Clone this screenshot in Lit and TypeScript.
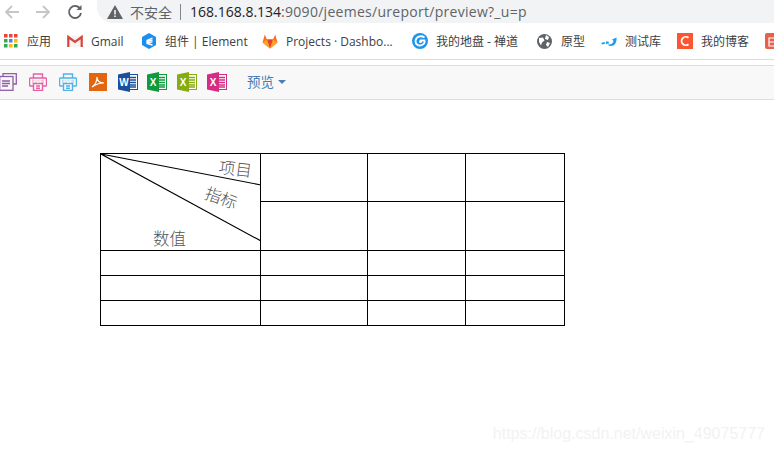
import { LitElement, html, css, svg } from "lit";
import { customElement } from "lit/decorators.js";

const printer = (c: string, label = "PDF") => html`<svg class="tool" width="18" height="18" viewBox="0 0 18 18" fill="none" stroke=${c} stroke-width="1.4">
  <path d="M4.500 5V1h9v4"/><path d="M4 13H1.500a1 1 0 0 1-1-1V6a1 1 0 0 1 1-1h15a1 1 0 0 1 1 1v6a1 1 0 0 1-1 1H14"/>
  <path d="M4.500 10.500v7h9v-7z"/><path d="M7 13h4M7 15.200h4"/>
  <rect x="3" y="6.500" width="12" height="4" fill=${c} stroke="none" opacity=".35"/>
  <text x="9" y="10" text-anchor="middle" font-size="4.500" font-family="Liberation Sans" font-weight="700" fill="#fff" stroke="none">${label}</text>
</svg>`;

const office = (dark: string, mid: string, letter: string) => html`<svg class="tool" width="20" height="20" viewBox="0 0 20 20">
  <rect x="9" y="2.500" width="10.500" height="15" fill="#fff" stroke=${mid} stroke-width="1"/>
  <path d="M11 5.500h7M11 8h7M11 10.500h7M11 13h7M11 15h7" stroke=${mid} stroke-width="1.300"/>
  <path d="M0 2.500 12 0v20L0 17.500z" fill=${dark}/>
  <text x="6" y="13.500" text-anchor="middle" font-size="10" font-weight="700" font-family="Liberation Sans" fill="#fff">${letter}</text>
</svg>`;

const appsDots = ["#e8453c","#e8453c","#e8453c","#34a853","#4285f4","#fbbc05","#34a853","#fbbc05","#34a853"];

const icons = {
  apps: html`<svg width="14" height="14" viewBox="0 0 14 14">${appsDots.map((c, i) => svg`<rect x=${(i % 3) * 5} y=${Math.floor(i / 3) * 5} width="3.500" height="3.500" fill=${c}/>`)}</svg>`,
  gmail: html`<svg width="16" height="16" viewBox="0 0 16 16"><rect y="2.500" width="16" height="11.500" fill="#f4f4f4"/><path d="M1.300 14V4L8 9l6.700-5v10" fill="none" stroke="#d8453a" stroke-width="2.200"/></svg>`,
  element: html`<svg width="16" height="16" viewBox="0 0 16 16"><path d="M8 0l7 4v8l-7 4-7-4V4z" fill="#1b8ff0"/><path d="M11.500 5 6 7.500v3L11.500 12M6 8.500l5.500-1.500M6.500 10l5-1.200" fill="none" stroke="#fff" stroke-width="1.300"/></svg>`,
  gitlab: html`<svg width="16" height="16" viewBox="0 0 16 16"><path d="M8 15.500 0.500 9.500 2.800 1.500 5 6.500h6l2.200-5 2.300 8z" fill="#fc6d26"/><path d="M8 15.500 5 6.500h6z" fill="#e24329"/><path d="M8 15.500.5 9.500 5 6.500zM8 15.500l7.500-6-4.500-3z" fill="#fca326"/></svg>`,
  disk: html`<svg width="16" height="16" viewBox="0 0 16 16"><circle cx="8" cy="8" r="8" fill="#1e95ea"/><path d="M12.500 4.500C9 2 4 3.500 3.500 8c-.3 3 3 5.500 6.500 4 2-.8 3-2.500 2.500-4.500H8" fill="none" stroke="#fff" stroke-width="1.800"/><circle cx="8.500" cy="8.500" r="1.500" fill="#fff"/></svg>`,
  globe: html`<svg width="15" height="15" viewBox="0 0 15 15"><circle cx="7.500" cy="7.500" r="7.500" fill="#5f6368"/><path d="M2 4l4-.5 1.500 3-2.500 2-1 3-2-3.500zM9 1l3 2-1 3-3-1zM10 8l3 1-2 4-2-2z" fill="#fff"/></svg>`,
  test: html`<svg width="16" height="16" viewBox="0 0 16 16"><path d="M0 10l3.500-1 1 1.500-3 1zM5 8.500h2.500l.5 2-3 .5zM7 11.500c3 .5 5-1 5.500-3.500L11 6.500l4.500-2c.5 5-2 8.500-5.500 8.500-1.500 0-2.500-.5-3-1.500z" fill="#1aa0ef"/></svg>`,
  csdn: html`<svg width="16" height="16" viewBox="0 0 16 16"><rect width="16" height="16" fill="#fc5531"/><path d="M11.500 4.800A4.200 4.200 0 1 0 11.500 11.200" fill="none" stroke="#fff" stroke-width="1.800"/></svg>`,
  jian: html`<svg width="16" height="16" viewBox="0 0 16 16"><rect width="16" height="16" rx="2" fill="#e8604c"/><path d="M4 5h8v8H4zM4 9h8" fill="none" stroke="#fff" stroke-width="1.200"/></svg>`,
};

const bookmarks = [
  { i: icons.apps, t: "应用", tw: 24, gap: 9, after: 16 },
  { i: icons.gmail, t: "Gmail", tw: 33, gap: 8, after: 17 },
  { i: icons.element, t: "组件 | Element", tw: 81, gap: 8, after: 16 },
  { i: icons.gitlab, t: "Projects · Dashbo...", tw: 109, gap: 8, after: 17 },
  { i: icons.disk, t: "我的地盘 - 禅道", tw: 85, gap: 8, after: 16 },
  { i: icons.globe, t: "原型", tw: 24, gap: 9, after: 16 },
  { i: icons.test, t: "测试库", tw: 44, gap: 8, after: 8 },
  { i: icons.csdn, t: "我的博客", tw: 48, gap: 8, after: 16 },
  { i: icons.jian, t: "", tw: 0, gap: 0, after: 0 },
];

const rows = [
  [null, "", "", ""],
  ["", "", ""],
  ["", "", "", ""],
  ["", "", "", ""],
  ["", "", "", ""],
];

@customElement("app-root")
export class AppRoot extends LitElement {
  static styles = css`
    :host { display: block; width: 774px; height: 453px; overflow: hidden; background: #fff; position: relative;
      font-family: "Open Sans", "Noto Sans CJK SC", sans-serif; }
    .nav { display: flex; height: 23px; align-items: center; background: #fff; }
    .navbtns { display: flex; align-items: center; width: 97px; flex: none; }
    .btn { display: block; flex: none; }
    .back { margin-left: 4px; }
    .fwd { margin-left: 15px; }
    .reload { margin-left: 16px; }
    .omni { flex: 1; height: 23px; background: #f1f3f4; border-radius: 0 0 0 16px; display: flex; align-items: center;
      font-size: 14px; color: #5f6368; padding-left: 10px; white-space: nowrap; }
    .warn { flex: none; margin-right: 7px; }
    .sec { font-size: 14px; color: #5f6368; }
    .sep { width: 1px; height: 16px; background: #80868b; margin: 0 9px 0 8px; flex: none; }
    .host { color: #202124; }
    .path { letter-spacing: 0.28px; }
    .bookmarks { height: 36px; display: flex; align-items: center; padding-left: 4px; border-bottom: 1px solid #dcdcdc;
      font-size: 12px; color: #3c4043; white-space: nowrap; overflow: hidden; }
    .bm { display: flex; align-items: center; flex: none; }
    .bm svg { display: block; flex: none; }
    .gapline { height: 5px; }
    .toolbar { height: 33px; box-sizing: content-box; background: #f8f8f8; border-top: 1px solid #ddd; border-bottom: 1px solid #ddd;
      display: flex; align-items: center; overflow: hidden; }
    .tool { display: block; flex: none; }
    .tools { display: flex; align-items: center; margin-left: -1px; margin-top: -2px; }
    .t1 { margin-left: 12px; }
    .t2 { margin-left: 11px; }
    .t3 { margin-left: 9px; }
    .t4 { margin-left: 10px; }
    .preview { margin-left: 20px; margin-top: -3px; font-size: 13.500px; color: #4a7cb5; display: flex; align-items: center; gap: 4px; }
    .caret { width: 0; height: 0; border-left: 4px solid transparent; border-right: 4px solid transparent; border-top: 4px solid #4a7cb5; margin-top: 2px; }
    .content { padding: 53px 0 0 100px; }
    table { border-collapse: collapse; table-layout: fixed; width: 465px; }
    td { border: 1px solid #000; padding: 0; }
    col.c1 { width: 160px; } col.c2 { width: 107px; } col.c3 { width: 98px; } col.c4 { width: 99px; }
    tr.r1 { height: 48px; } tr.r2 { height: 49px; } tr.r3 { height: 25px; }
    .slash { position: relative; }
    .slash svg { position: absolute; left: 0; top: 0; display: block; }
    .lbl { position: absolute; font-size: 16.500px; line-height: 18px; color: #555; font-family: "Noto Sans CJK SC", sans-serif; white-space: nowrap; font-weight: 300; }
    .a { left: 118px; top: 5px; transform: rotate(7deg); }
    .b { left: 104px; top: 34px; transform: rotate(20deg); }
    .c { left: 52px; top: 75px; }
    .mark { position: absolute; right: 9px; top: 425px; font-family: "Liberation Sans", sans-serif; font-size: 16px; color: #f2f2f2; white-space: nowrap; }
  `;

  render() {
    return html`
      <div class="nav">
        <div class="navbtns">
          <svg class="btn back" width="16" height="16" viewBox="0 0 16 16" fill="none" stroke="#c4c6c8" stroke-width="1.800"><path d="M15 8H2M8 2 2 8l6 6"/></svg>
          <svg class="btn fwd" width="16" height="16" viewBox="0 0 16 16" fill="none" stroke="#c4c6c8" stroke-width="1.800"><path d="M1 8h13M8 2l6 6-6 6"/></svg>
          <svg class="btn reload" width="16" height="16" viewBox="0 0 16 16" fill="none" stroke="#5f6368" stroke-width="1.800"><path d="M13.300 5A6 6 0 1 0 14 9"/><path d="M14.500 1v5h-5" fill="#5f6368" stroke="none"/></svg>
        </div>
        <div class="omni">
          <svg class="warn" width="16" height="14" viewBox="0 0 16 14"><path d="M8 0l8 14H0z" fill="#5f6368"/><path d="M7.200 5h1.600v4.500H7.200zM7.200 10.500h1.600V12H7.200z" fill="#f1f3f4"/></svg>
          <span class="sec">不安全</span><span class="sep"></span>
          <span><span class="host">168.168.8.134</span><span class="path">:9090/jeemes/ureport/preview?_u=p</span></span>
        </div>
      </div>
      <div class="bookmarks">
        ${bookmarks.map(b => html`<div class="bm" style="margin-right:${b.after}px">
          ${b.i}<span style="margin-left:${b.gap}px;width:${b.tw}px">${b.t}</span></div>`)}
      </div>
      <div class="gapline"></div>
      <div class="toolbar">
        <div class="tools">
          <svg class="tool" width="18" height="18" viewBox="0 0 18 18" fill="none" stroke="#8e5ea8" stroke-width="1.300"><path d="M4 3V.7h13.300V11H14"/><rect x=".7" y="3.500" width="13.300" height="13.800" fill="#f8f8f8"/><path d="M3 8h8M3 10.500h8M3 13h6"/></svg>
          <span class="t1">${printer("#e85fa4")}</span>
          <span class="t1">${printer("#4fb3e8")}</span>
          <svg class="tool t1" width="18" height="18" viewBox="0 0 18 18"><rect width="18" height="18" fill="#e2650f"/><path d="M3 14c3-2 5-6 5-10 0 4 2 6 7 6-4 0-8 1-12 4z" fill="none" stroke="#fff" stroke-width="1.200"/></svg>
          <span class="t2">${office("#1a4f9c", "#1a4f9c", "W")}</span>
          <span class="t3">${office("#109a3c", "#109a3c", "X")}</span>
          <span class="t4">${office("#86ac10", "#86ac10", "X")}</span>
          <span class="t4">${office("#d62b82", "#d62b82", "X")}</span>
        </div>
        <div class="preview">预览<span class="caret"></span></div>
      </div>
      <div class="content">
        <table>
          <colgroup><col class="c1"/><col class="c2"/><col class="c3"/><col class="c4"/></colgroup>
          <tbody>
            ${rows.map((r, i) => html`<tr class=${i === 0 ? "r1" : i === 1 ? "r2" : "r3"}>
              ${r.map(c => c === null ? html`<td rowspan="2" class="slash">
                <svg width="160" height="97" viewBox="0 0 160 97" fill="none" stroke="#000" stroke-width="1.100"><path d="M0 0 160 31M0 0 160 87"/></svg>
                <span class="lbl a">项目</span><span class="lbl b">指标</span><span class="lbl c">数值</span>
              </td>` : html`<td></td>`)}
            </tr>`)}
          </tbody>
        </table>
      </div>
      <div class="mark">https://blog.csdn.net/weixin_49075777</div>
    `;
  }
}
